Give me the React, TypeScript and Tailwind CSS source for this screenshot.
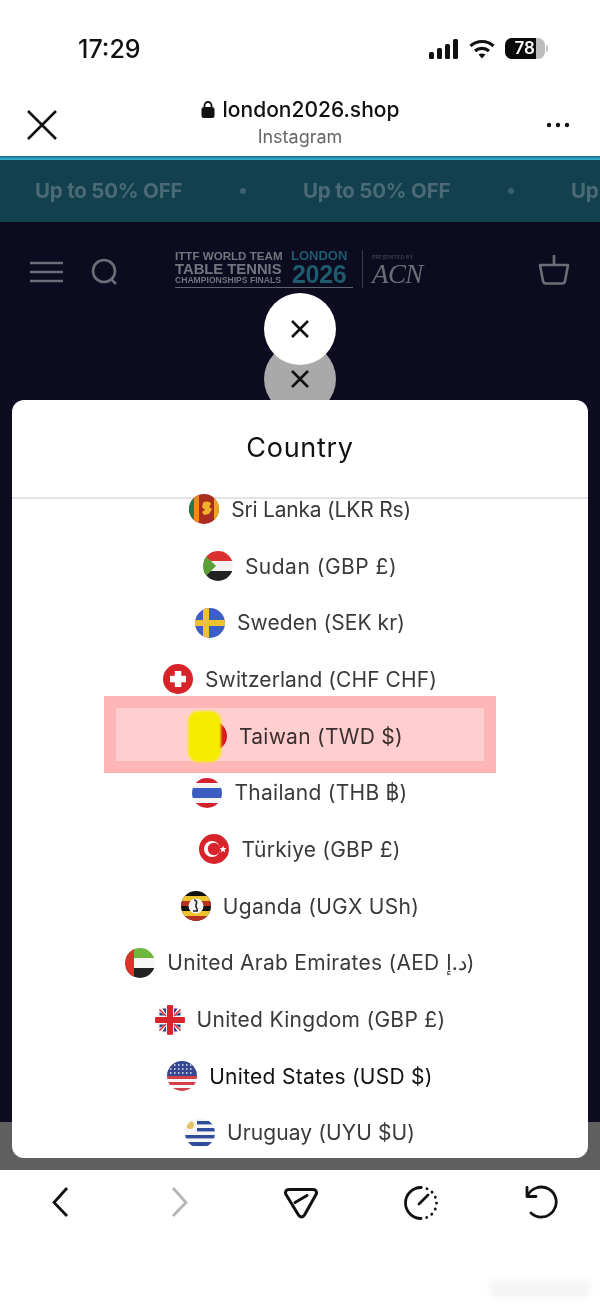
import React from "react";

const Circle = ({ id, children }: { id: string; children: React.ReactNode }) => (
  <svg width="30" height="30" viewBox="0 0 30 30" className="shrink-0">
    <defs>
      <clipPath id={id}>
        <circle cx="15" cy="15" r="15" />
      </clipPath>
    </defs>
    <g clipPath={`url(#${id})`}>{children}</g>
  </svg>
);

const flags: Record<string, React.ReactNode> = {
  lk: (
    <Circle id="lk">
      <rect width="30" height="30" fill="#a92c1f" />
      <rect width="5" height="30" fill="#1f7a4d" />
      <rect x="5" width="5" height="30" fill="#ee8a1e" />
      <rect x="25" width="5" height="30" fill="#e9a71e" />
      <path d="M14 9c2-2 7-2 8 1l-2 3 3 2-3 5-5 1-2-3 3-2-3-3z" fill="#eeb32a" />
    </Circle>
  ),
  sd: (
    <Circle id="sd">
      <rect width="30" height="10" fill="#dc2f2f" />
      <rect y="10" width="30" height="10" fill="#f2f2f2" />
      <rect y="20" width="30" height="10" fill="#222" />
      <path d="M0 2L13 15L0 28Z" fill="#5a9e37" />
    </Circle>
  ),
  se: (
    <Circle id="se">
      <rect width="30" height="30" fill="#3b5fc4" />
      <rect x="8" width="6" height="30" fill="#efc22f" />
      <rect y="12" width="30" height="6" fill="#efc22f" />
    </Circle>
  ),
  ch: (
    <Circle id="ch">
      <rect width="30" height="30" fill="#d8232a" />
      <rect x="11.800" y="7" width="6.500" height="16" fill="#fff" />
      <rect x="7" y="11.800" width="16" height="6.500" fill="#fff" />
    </Circle>
  ),
  th: (
    <Circle id="th">
      <rect width="30" height="30" fill="#f4f4f4" />
      <rect width="30" height="5" fill="#d5212e" />
      <rect y="25" width="30" height="5" fill="#d5212e" />
      <rect y="10" width="30" height="10" fill="#3b5cc0" />
    </Circle>
  ),
  tr: (
    <Circle id="tr">
      <rect width="30" height="30" fill="#d8232a" />
      <circle cx="13" cy="15" r="8" fill="#fff" />
      <circle cx="15" cy="15" r="6.200" fill="#d8232a" />
      <path d="M24 11.500l.9 2.600 2.700.1-2.100 1.600.8 2.600-2.300-1.500-2.300 1.500.8-2.600-2.100-1.600 2.700-.1z" fill="#fff" />
    </Circle>
  ),
  ug: (
    <Circle id="ug">
      <rect width="30" height="30" fill="#111" />
      <rect y="5" width="30" height="5" fill="#efc22f" />
      <rect y="10" width="30" height="5" fill="#b5301f" />
      <rect y="20" width="30" height="5" fill="#efc22f" />
      <rect y="25" width="30" height="5" fill="#b5301f" />
      <circle cx="15" cy="15" r="7.500" fill="#f4f4f4" />
      <path d="M13 9c3 0 3 3 2 5s2 3 1 6M12 20h5" stroke="#222" strokeWidth="1.600" fill="none" />
    </Circle>
  ),
  ae: (
    <Circle id="ae">
      <rect width="30" height="10" fill="#6fb63c" />
      <rect y="10" width="30" height="10" fill="#f6f6f6" />
      <rect y="20" width="30" height="10" fill="#222" />
      <rect width="9" height="30" fill="#d8352a" />
    </Circle>
  ),
  gb: (
    <Circle id="gb">
      <rect width="30" height="30" fill="#f6f6f6" />
      <path d="M4.500 7L10 10.500H4.500ZM7.500 3.500L11 9V3.500ZM25.500 7L20 10.500H25.500ZM22.500 3.500L19 9V3.500ZM4.500 23L10 19.500H4.500ZM7.500 26.500L11 21V26.500ZM25.500 23L20 19.500H25.500ZM22.500 26.500L19 21V26.500Z" fill="#27407f" />
      <path d="M3 3L11 11M27 27L19 19M27 3L19 11M3 27L11 19" stroke="#d8232a" strokeWidth="1.400" />
      <rect x="12" width="6" height="30" fill="#d8232a" />
      <rect y="12" width="30" height="6" fill="#d8232a" />
    </Circle>
  ),
  us: (
    <Circle id="us">
      <rect width="30" height="30" fill="#f6f6f6" />
      <rect y="3" width="30" height="3" fill="#d5404a" />
      <rect y="9" width="30" height="3" fill="#d5404a" />
      <rect y="15" width="30" height="3" fill="#d5404a" />
      <rect y="21" width="30" height="3" fill="#d5404a" />
      <rect y="27" width="30" height="3" fill="#d5404a" />
      <rect width="30" height="15" fill="#36478f" />
      <path d="M3 4h24M3 8h24M3 12h24" stroke="#e8ecf8" strokeWidth="1.500" strokeDasharray="1.500 2.500" />
    </Circle>
  ),
  uy: (
    <Circle id="uy">
      <rect width="30" height="30" fill="#f6f6f6" />
      <rect x="12" y="3" width="18" height="3.400" fill="#2f4d9c" />
      <rect x="12" y="10" width="18" height="3.400" fill="#2f4d9c" />
      <rect y="17" width="30" height="3.400" fill="#2f4d9c" />
      <rect y="24" width="30" height="4" fill="#2f4d9c" />
      <circle cx="5" cy="7" r="4" fill="#e5c46a" />
    </Circle>
  ),
};

const rows: { f: string; t: string; dark?: boolean; sp: string }[] = [
  { f: "lk", t: "Sri Lanka (LKR Rs)", sp: "tracking-[-0.2px]" },
  { f: "sd", t: "Sudan (GBP £)", sp: "tracking-[0.5px]" },
  { f: "se", t: "Sweden (SEK kr)", sp: "tracking-[0.07px]" },
  { f: "ch", t: "Switzerland (CHF CHF)", sp: "tracking-[0.07px]" },
  { f: "tw", t: "Taiwan (TWD $)", sp: "tracking-[0.27px]" },
  { f: "th", t: "Thailand (THB ฿)", sp: "tracking-[0.27px]" },
  { f: "tr", t: "Türkiye (GBP £)", sp: "tracking-[0.2px]" },
  { f: "ug", t: "Uganda (UGX USh)", sp: "tracking-[0.3px]" },
  { f: "ae", t: "United Arab Emirates (AED د.إ)", sp: "tracking-[0.27px]" },
  { f: "gb", t: "United Kingdom (GBP £)", sp: "tracking-[0.3px]" },
  { f: "us", t: "United States (USD $)", dark: true, sp: "tracking-[0.27px]" },
  { f: "uy", t: "Uruguay (UYU $U)", sp: "tracking-[0.12px]" },
];

const XIcon = () => (
  <svg width="20" height="20" viewBox="0 0 20 20" fill="none" stroke="#111" strokeWidth="2.600">
    <path d="M2 2L18 18M18 2L2 18" />
  </svg>
);

const Up = ({ className }: { className: string }) => (
  <span className={`font-['Inter',sans-serif] text-[20.5px] font-bold tracking-[-0.2px] text-[#4b6a75] ${className}`}>Up to 50% OFF</span>
);

export default function App() {
  return (
    <div className="relative flex h-[1304px] w-[600px] flex-col overflow-hidden bg-white font-['Inter',sans-serif]">
      {/* status bar */}
      <div className="flex h-[96px] shrink-0 items-start justify-between pl-[78px] pr-[52px] pt-[32px]">
        <span className="text-[25px] font-medium leading-[34px] text-[#111]">17:29</span>
        <div className="flex items-center gap-[10px] pt-[6px]">
          <svg width="30" height="20" viewBox="0 0 30 20" fill="#111">
            <rect x="0" y="13" width="5" height="7" rx="1.500" />
            <rect x="8" y="9" width="5" height="11" rx="1.500" />
            <rect x="16" y="5" width="5" height="15" rx="1.500" />
            <rect x="24" y="0" width="5" height="20" rx="1.500" />
          </svg>
          <svg width="26" height="20" viewBox="0 0 26 20" fill="none" stroke="#111" strokeWidth="3.200">
            <path d="M1.500 7C8 1 18 1 24.500 7" />
            <path d="M6 12C10 8.500 16 8.500 20 12" />
            <path d="M13 19.500L9.500 15.600C11.500 14 14.500 14 16.500 15.600Z" fill="#111" stroke="none" />
          </svg>
          <div className="flex items-center">
            <div className="flex h-[21px] w-[40px] overflow-hidden rounded-[7px] bg-[#bdbdbd]">
              <div className="flex w-[31px] items-center justify-end bg-[#0a0a0a] pr-[1px]">
                <span className="text-[17px] font-semibold leading-none text-white">78</span>
              </div>
            </div>
            <div className="ml-[1px] h-[7px] w-[2px] rounded-r bg-[#c4c4c4]" />
          </div>
        </div>
      </div>

      {/* browser header */}
      <div className="relative flex h-[60px] shrink-0 flex-col items-center">
        <div className="flex h-[26px] items-center gap-[8px]">
          <svg width="14" height="17" viewBox="0 0 14 17" fill="#111">
            <rect x="0.500" y="6" width="13" height="11" rx="2.500" />
            <path d="M3.500 7V4.500a3.500 3.500 0 017 0V7" fill="none" stroke="#111" strokeWidth="1.800" />
          </svg>
          <span className="text-[21px] font-medium leading-none text-[#111]">london2026.shop</span>
        </div>
        <span className="mt-[4px] text-[18px] leading-[22px] text-[#666]">Instagram</span>
        <svg className="absolute left-[26px] top-[13px]" width="32" height="32" viewBox="0 0 32 32" fill="none" stroke="#111" strokeWidth="2.600">
          <path d="M2 2L30 30M30 2L2 30" />
        </svg>
        <svg className="absolute left-[546px] top-[26px]" width="24" height="6" viewBox="0 0 24 6" fill="#111">
          <circle cx="3" cy="3" r="2.200" />
          <circle cx="12" cy="3" r="2.200" />
          <circle cx="21" cy="3" r="2.200" />
        </svg>
      </div>

      {/* progress line */}
      <div className="h-[4px] shrink-0 bg-gradient-to-b from-[#0f6c96] to-[#39b6cf]" />

      {/* announcement */}
      <div className="flex h-[62px] shrink-0 items-center overflow-hidden whitespace-nowrap bg-[#12404f] pl-[35px]">
        <Up className="w-[205px] shrink-0" />
        <span className="h-[6px] w-[6px] shrink-0 rounded-full bg-[#3c6170]" />
        <Up className="ml-[57px] w-[205px] shrink-0" />
        <span className="h-[6px] w-[6px] shrink-0 rounded-full bg-[#3c6170]" />
        <Up className="ml-[57px] shrink-0" />
      </div>

      {/* dark page */}
      <div className="flex min-h-0 flex-1 flex-col bg-[#0c0b1f]">
        <div className="relative flex h-[76px] shrink-0 items-center pl-[30px] pt-[24px]">
          <svg width="33" height="22" viewBox="0 0 33 22" stroke="#6d6d78" strokeWidth="2.600">
            <path d="M0 2H33M0 11H33M0 20H33" />
          </svg>
          <svg className="ml-[28px]" width="27" height="28" viewBox="0 0 27 28" fill="none" stroke="#6d6d78" strokeWidth="2.600">
            <circle cx="13" cy="13" r="11" />
            <path d="M20 21L25 26" />
          </svg>
          {/* logo */}
          <div className="-mt-[6px] ml-[57px] flex h-[38px] w-[178px] shrink-0 gap-[2px] border-b border-[#5b6470] whitespace-nowrap">
            <div className="flex w-[114px] shrink-0 flex-col font-['Liberation_Sans',sans-serif] font-bold text-[#74747e]">
              <span className="text-[11.600px] leading-[12px]">ITTF WORLD TEAM</span>
              <span className="text-[14.800px] leading-[14px]">TABLE TENNIS</span>
              <span className="text-[8.600px] leading-[9px]">CHAMPIONSHIPS FINALS</span>
            </div>
            <div className="flex flex-col items-center font-['Liberation_Sans',sans-serif] font-bold text-[#1f5b6e]">
              <span className="text-[13px] leading-[12px]">LONDON</span>
              <span className="text-[25px] leading-[25px] tracking-[-0.3px]">2026</span>
            </div>
          </div>
          <div className="-mt-[6px] ml-[9px] h-[38px] w-px bg-[#3a3a4a]" />
          <div className="-mt-[4px] ml-[9px] flex flex-col whitespace-nowrap">
            <span className="text-[5px] font-bold leading-[8px] tracking-[0.3px] text-[#3f3f4e]">PRESENTED BY</span>
            <span className="font-['Liberation_Serif',serif] text-[27px] italic leading-[26px] tracking-[-0.6px] text-[#6d6d78]">ACN</span>
          </div>
          <svg className="absolute left-[538px] top-[33px]" width="32" height="30" viewBox="0 0 32 30" fill="none" stroke="#6d6d78" strokeWidth="2.600">
            <path d="M16 0V9M2 10H30L27 26C26.700 27.600 26 28.500 24 28.500H8C6 28.500 5.300 27.600 5 26Z" strokeLinejoin="round" />
          </svg>
        </div>
        <div className="flex-1" />
        <div className="h-[48px] shrink-0 bg-[#5f5f5f]" />
      </div>

      {/* browser toolbar */}
      <div className="flex h-[134px] shrink-0 items-start bg-white pt-[16px]">
        <svg className="ml-[51px]" width="18" height="32" viewBox="0 0 18 32" fill="none" stroke="#111" strokeWidth="2.800">
          <path d="M16 2L3 16.500L16 30" />
        </svg>
        <svg className="ml-[102px]" width="18" height="32" viewBox="0 0 18 32" fill="none" stroke="#b5b5b5" strokeWidth="2.800">
          <path d="M2 2L15 16.500L2 30" />
        </svg>
        <svg className="ml-[94px] mt-[1px]" width="36" height="32" viewBox="0 0 36 32" fill="none" stroke="#111" strokeWidth="3" strokeLinejoin="round" strokeLinecap="round">
          <path d="M6 2.500H30C33 2.500 34.300 5 33 7.500L21.500 28C20 30.500 17 30.500 15.500 28L3 7.500C1.700 5 3 2.500 6 2.500Z" />
          <path d="M12 15.500L24 8.500" />
        </svg>
        <svg className="ml-[84px] -mt-[1px]" width="36" height="36" viewBox="0 0 36 36" fill="none" stroke="#111" strokeWidth="2.800" strokeLinecap="round">
          <path d="M18 2.500A15.500 15.500 0 0 0 18 33.500" />
          <path d="M18 2.500A15.500 15.500 0 0 1 33.500 18A15.500 15.500 0 0 1 18 33.500" strokeDasharray="0.100 5.980" />
          <path d="M16 19L25 10" />
        </svg>
        <svg className="ml-[85px] -mt-[1px]" width="34" height="34" viewBox="0 0 34 34" fill="none" stroke="#111" strokeWidth="2.800" strokeLinecap="round">
          <path d="M3.500 11A15 15 0 1 1 7 28" />
          <path d="M3 2.500V11.500H12" strokeLinejoin="round" />
        </svg>
      </div>

      {/* modal close buttons */}
      <div className="absolute left-[264px] top-[343px] flex h-[72px] w-[72px] items-center justify-center rounded-full bg-[#a9a9a9]">
        <XIcon />
      </div>
      <div className="absolute left-[264px] top-[293px] flex h-[72px] w-[72px] items-center justify-center rounded-full bg-white">
        <XIcon />
      </div>

      {/* modal */}
      <div className="absolute left-[12px] top-[400px] flex h-[758px] w-[576px] flex-col overflow-hidden rounded-[12px] bg-white">
        <div className="flex h-[99px] shrink-0 items-center justify-center border-b-2 border-[#e4e4e4] pb-[2px]">
          <span className="text-[27px] leading-none tracking-[0.7px] text-[#111]">Country</span>
        </div>
        <div className="-mt-[18px] flex flex-col">
          {rows.map((r) => (
            <div key={r.f} className="flex h-[56.700px] shrink-0 items-center justify-center gap-[12px]">
              {r.f === "tw" ? (
                <svg width="30" height="30" viewBox="0 0 30 30" className="shrink-0">
                  <circle cx="15" cy="15" r="15" fill="#d8232a" />
                </svg>
              ) : (
                flags[r.f]
              )}
              <span className={`whitespace-nowrap text-[21px] leading-none ${r.sp} ${r.dark ? "text-[#111]" : "text-[#3a3a3a]"}`}>{r.t}</span>
            </div>
          ))}
        </div>
      </div>

      {/* redaction on Taiwan row */}
      <div className="absolute left-[104px] top-[696px] h-[77px] w-[392px] bg-[#ffb6b6] p-[12px] mix-blend-multiply">
        <div className="h-full w-full bg-[#ffcfcf]" />
      </div>
      <div className="absolute left-[188px] top-[711px] h-[51px] w-[33px] rounded-[10px] bg-[#f7ec00] blur-[1px]" />

      {/* watermark */}
      <div className="absolute left-[490px] top-[1280px] h-[18px] w-[100px] rounded bg-[#ececec]/50 blur-[3px]" />
    </div>
  );
}
